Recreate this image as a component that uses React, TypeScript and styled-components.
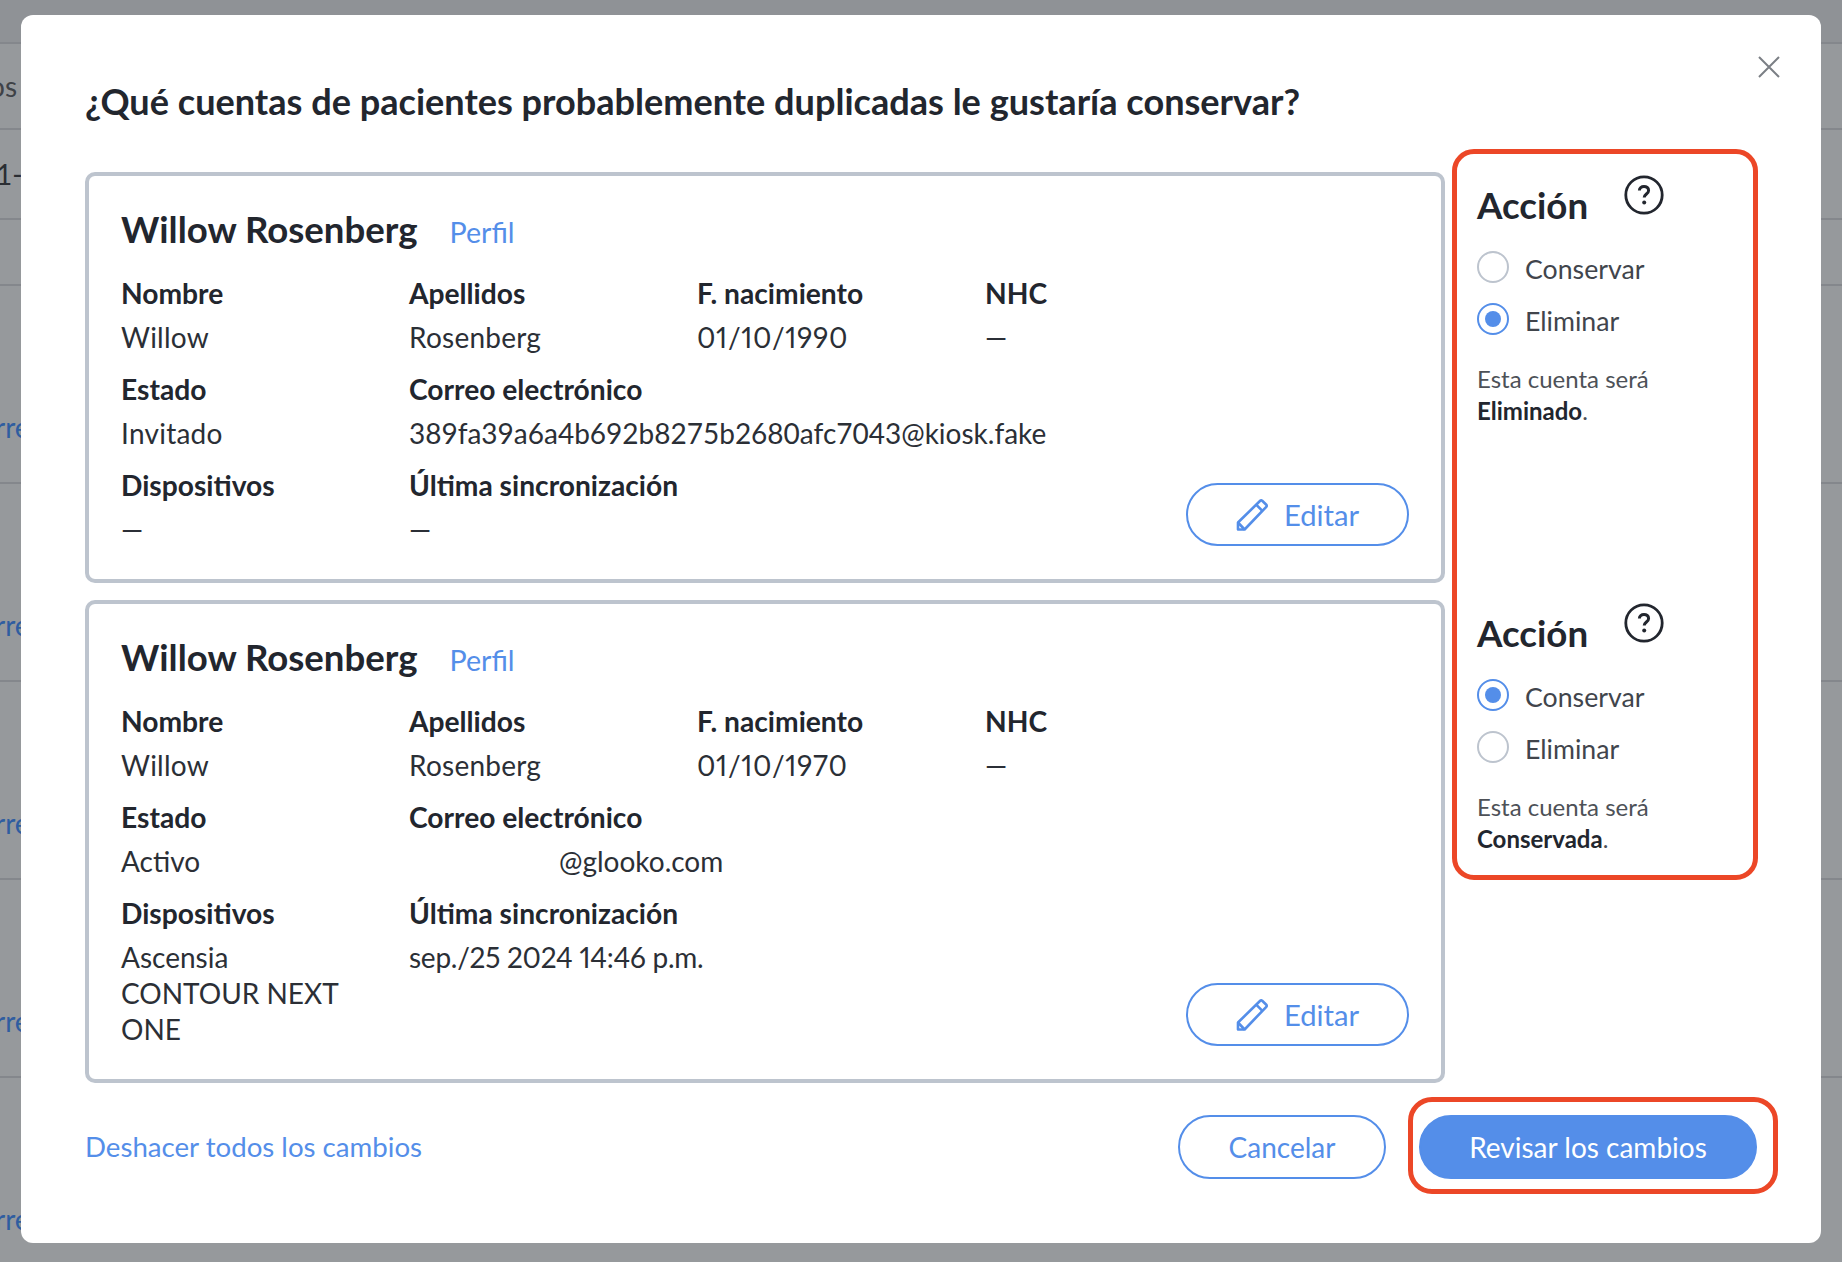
import React from 'react'
import styled, { createGlobalStyle } from 'styled-components'

const GlobalStyle = createGlobalStyle`
    html, body {
        margin: 0;
        padding: 0;
        height: 100%;
        overflow: hidden;
        background: #96999c;
    }
    * {
        box-sizing: border-box;
    }
    body {
        font-family: 'Lato', 'Liberation Sans', sans-serif;
        color: #22262e;
    }
`

const Backdrop = styled.div`
    position: relative;
    width: 1842px;
    height: 1262px;
    overflow: hidden;
    background: #96999c;
`

const BackRow = styled.div<{ $h: number; $dark?: boolean }>`
    height: ${(p) => p.$h}px;
    border-bottom: 2px solid #84878c;
    background: ${(p) => (p.$dark ? '#8f9296' : 'transparent')};
    display: flex;
    align-items: center;
    font-size: 28px;
`

const BackText = styled.span<{ $color: string; $left: number; $down?: number }>`
    margin-left: ${(p) => p.$left}px;
    margin-top: ${(p) => p.$down ?? 0}px;
    color: ${(p) => p.$color};
    white-space: nowrap;
`

const Modal = styled.div`
    position: absolute;
    left: 21px;
    top: 15px;
    width: 1800px;
    height: 1228px;
    background: #ffffff;
    border-radius: 12px;
    padding: 63px 64px 0 64px;
`

const CloseButton = styled.button`
    position: absolute;
    top: 41px;
    right: 41px;
    width: 22px;
    height: 22px;
    padding: 0;
    border: 0;
    background: none;
    display: flex;
`

const Title = styled.h2`
    margin: 0;
    font-size: 36.1px;
    line-height: 46px;
    font-weight: 700;
`

const Rows = styled.div`
    position: relative;
    margin-top: 48px;
    display: flex;
    flex-direction: column;
    gap: 17px;
`

const Row = styled.div`
    display: flex;
`

const Card = styled.section`
    width: 1360px;
    border: 4px solid #bdc4ce;
    border-radius: 10px;
    padding: 31px 32px 32px 32px;
`

const CardHeader = styled.div`
    display: flex;
    align-items: baseline;
    gap: 32px;
    height: 44px;
`

const Name = styled.h3`
    margin: 0;
    font-size: 36.6px;
    line-height: 44px;
    font-weight: 700;
`

const TextLink = styled.a`
    color: #548ee9;
    font-size: 27.65px;
    line-height: 36px;
    text-decoration: none;
`

const ProfileLink = styled(TextLink)`
    font-size: 28.6px;
`

const Fields = styled.div`
    margin-top: 24px;
    display: grid;
    grid-template-columns: 288px 288px 288px 1fr;
    row-gap: 16px;
`

const Field = styled.div<{ $span?: number }>`
    grid-column: span ${(p) => p.$span ?? 1};
`

const Label = styled.div`
    font-size: 28.2px;
    line-height: 36px;
    font-weight: 700;
`

const Value = styled.div<{ $wide?: boolean }>`
    margin-top: 8px;
    font-size: 28px;
    line-height: 36px;
    color: #2b2f36;
    padding-right: 40px;
    letter-spacing: ${(p) => (p.$wide ? '0.25px' : '0')};
`

const DateValue = styled.span<{ $tracking: number }>`
    font-variant-numeric: proportional-nums;
    letter-spacing: ${(p) => p.$tracking}px;
`

const Redacted = styled.span`
    display: inline-block;
    width: 150px;
`

const PillButton = styled.button<{ $filled?: boolean }>`
    height: 64px;
    border-radius: 32px;
    border: 2px solid #548ee9;
    background: ${(p) => (p.$filled ? '#548ee9' : '#ffffff')};
    color: ${(p) => (p.$filled ? '#ffffff' : '#548ee9')};
    font-family: inherit;
    font-size: 28px;
    padding: 0;
    display: flex;
    align-items: center;
    justify-content: center;
`

const EditButton = styled(PillButton)`
    grid-column: 4;
    justify-self: end;
    align-self: end;
    width: 223px;
    height: 63px;
    gap: 16px;
    font-size: 29.2px;
    margin-bottom: 1px;
`

const ActionPanel = styled.aside`
    margin-left: 32px;
    width: 280px;
    padding-top: 12px;
`

const ActionHead = styled.div`
    display: flex;
    align-items: flex-start;
    gap: 36px;
    height: 50px;
`

const ActionTitle = styled.h3`
    margin: -2px 0 0 0;
    font-size: 36.7px;
    line-height: 46px;
    font-weight: 700;
`

const HelpIcon = styled.svg`
    margin-top: -9px;
    flex: none;
`

const RadioList = styled.div`
    margin-top: 17px;
    display: flex;
    flex-direction: column;
    gap: 20px;
`

const RadioRow = styled.label`
    display: flex;
    align-items: center;
    gap: 16px;
    height: 32px;
    font-size: 26.7px;
    color: #41454c;
    padding-top: 4px;
`

const RadioCircle = styled.span<{ $checked?: boolean }>`
    width: 32px;
    height: 32px;
    margin-top: -4px;
    border-radius: 50%;
    border: 2px solid ${(p) => (p.$checked ? '#548ee9' : '#bdc4ce')};
    display: flex;
    align-items: center;
    justify-content: center;
    &::after {
        content: '';
        width: 16px;
        height: 16px;
        border-radius: 50%;
        background: ${(p) => (p.$checked ? '#548ee9' : 'transparent')};
    }
`

const Note = styled.p`
    margin: 28px 0 0 0;
    font-size: 24px;
    line-height: 32px;
    color: #4d5157;
    b {
        color: #22262e;
        font-weight: 700;
    }
`

const ActionFrame = styled.div`
    position: absolute;
    left: 1367px;
    top: -23px;
    width: 306px;
    height: 731px;
    border: 5px solid #ec4727;
    border-radius: 22px;
    pointer-events: none;
`

const Footer = styled.div`
    margin-top: 32px;
    display: flex;
    align-items: center;
    justify-content: space-between;
`

const FooterActions = styled.div`
    display: flex;
    gap: 33px;
`

const ReviewWrap = styled.div`
    position: relative;
    &::after {
        content: '';
        position: absolute;
        inset: -18px -21px -15px -11px;
        border: 5px solid #ec4727;
        border-radius: 24px;
    }
`

const CancelButton = styled(PillButton)`
    width: 208px;
`

const ReviewButton = styled(PillButton)`
    width: 338px;
`

const PencilIcon = () => (
    <svg width="32" height="32" viewBox="0 0 32 32" fill="none" stroke="#548ee9" strokeWidth="2.6" strokeLinejoin="round">
        <path d="M2 30.5V23.5L24.2 1.8a1.4 1.4 0 0 1 2 0L30.3 5.8a1.4 1.4 0 0 1 0 2L8.6 30.5Z" />
        <path d="M20.2 5.7L26.4 11.9M2 23.5L8.6 30.5" />
    </svg>
)

const QuestionIcon = () => (
    <HelpIcon width="40" height="40" viewBox="0 0 40 40" fill="none">
        <circle cx="20" cy="20" r="18.2" stroke="#22262e" strokeWidth="2.8" />
        <path d="M15.4 15.6c0-2.6 2-4.2 4.6-4.2s4.6 1.6 4.6 4c0 3.6-4.4 3.6-4.4 7.2" stroke="#22262e" strokeWidth="3" />
        <circle cx="20.2" cy="27.6" r="2" fill="#22262e" />
    </HelpIcon>
)

interface Account {
    birth: string
    status: string
    email: React.ReactNode
    devices: React.ReactNode
    lastSync: string
    keep: boolean
}

const accounts: Account[] = [
    {
        birth: '01/10/1990',
        status: 'Invitado',
        email: '389fa39a6a4b692b8275b2680afc7043@kiosk.fake',
        devices: '—',
        lastSync: '—',
        keep: false,
    },
    {
        birth: '01/10/1970',
        status: 'Activo',
        email: (
            <>
                <Redacted />
                @glooko.com
            </>
        ),
        devices: 'Ascensia CONTOUR NEXT ONE',
        lastSync: 'sep./25 2024 14:46 p.m.',
        keep: true,
    },
]

const backRows: { h: number; dark?: boolean; text?: string; color?: string; left?: number; down?: number }[] = [
    { h: 44, dark: true },
    { h: 86, text: 'os', color: '#3f4247', left: -11 },
    { h: 90, text: '1-', color: '#2b2e33', left: -4 },
    { h: 66 },
    { h: 198, text: 'rre', color: '#2f5da0', left: -5, down: 86 },
    { h: 198, text: 'rre', color: '#2f5da0', left: -5, down: 86 },
    { h: 198, text: 'rre', color: '#2f5da0', left: -5, down: 86 },
    { h: 198, text: 'rre', color: '#2f5da0', left: -5, down: 86 },
    { h: 198, text: 'rre', color: '#2f5da0', left: -5, down: 86 },
]

const AccountCard = ({ account }: { account: Account }) => (
    <Card>
        <CardHeader>
            <Name>Willow Rosenberg</Name>
            <ProfileLink>Perfil</ProfileLink>
        </CardHeader>
        <Fields>
            <Field>
                <Label>Nombre</Label>
                <Value $wide>Willow</Value>
            </Field>
            <Field>
                <Label>Apellidos</Label>
                <Value $wide>Rosenberg</Value>
            </Field>
            <Field>
                <Label>F. nacimiento</Label>
                <Value>
                    <DateValue $tracking={0.7}>{account.birth}</DateValue>
                </Value>
            </Field>
            <Field>
                <Label>NHC</Label>
                <Value>—</Value>
            </Field>
            <Field>
                <Label>Estado</Label>
                <Value $wide={account.status === 'Invitado'}>{account.status}</Value>
            </Field>
            <Field $span={3}>
                <Label>Correo electrónico</Label>
                <Value>{account.email}</Value>
            </Field>
            <Field>
                <Label>Dispositivos</Label>
                <Value>{account.devices}</Value>
            </Field>
            <Field $span={2}>
                <Label>Última sincronización</Label>
                <Value>
                    <DateValue $tracking={-0.26}>{account.lastSync}</DateValue>
                </Value>
            </Field>
            <EditButton>
                <PencilIcon />
                Editar
            </EditButton>
        </Fields>
    </Card>
)

const AccountAction = ({ keep }: { keep: boolean }) => (
    <ActionPanel>
        <ActionHead>
            <ActionTitle>Acción</ActionTitle>
            <QuestionIcon />
        </ActionHead>
        <RadioList>
            <RadioRow>
                <RadioCircle $checked={keep} />
                Conservar
            </RadioRow>
            <RadioRow>
                <RadioCircle $checked={!keep} />
                Eliminar
            </RadioRow>
        </RadioList>
        <Note>
            Esta cuenta será
            <br />
            <b>{keep ? 'Conservada' : 'Eliminado'}</b>.
        </Note>
    </ActionPanel>
)

export default function App() {
    return (
        <Backdrop>
            <GlobalStyle />
            {backRows.map((row, i) => (
                <BackRow key={i} $h={row.h} $dark={row.dark}>
                    {row.text && (
                        <BackText $color={row.color ?? '#000'} $left={row.left ?? 0} $down={row.down}>
                            {row.text}
                        </BackText>
                    )}
                </BackRow>
            ))}
            <Modal>
                <CloseButton>
                    <svg width="22" height="22" viewBox="0 0 22 22" stroke="#7b7f85" strokeWidth="2">
                        <path d="M1 1L21 21M21 1L1 21" />
                    </svg>
                </CloseButton>
                <Title>¿Qué cuentas de pacientes probablemente duplicadas le gustaría conservar?</Title>
                <Rows>
                    {accounts.map((account) => (
                        <Row key={account.birth}>
                            <AccountCard account={account} />
                            <AccountAction keep={account.keep} />
                        </Row>
                    ))}
                    <ActionFrame />
                </Rows>
                <Footer>
                    <TextLink>Deshacer todos los cambios</TextLink>
                    <FooterActions>
                        <CancelButton>Cancelar</CancelButton>
                        <ReviewWrap>
                            <ReviewButton $filled>Revisar los cambios</ReviewButton>
                        </ReviewWrap>
                    </FooterActions>
                </Footer>
            </Modal>
        </Backdrop>
    )
}
